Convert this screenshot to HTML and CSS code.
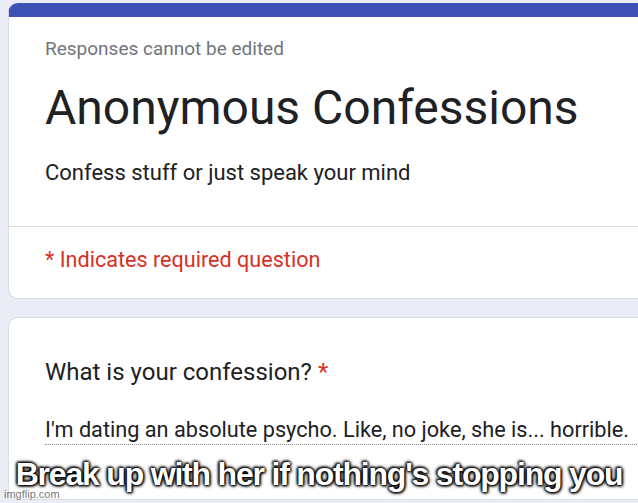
FILE: index.html
```html
<!DOCTYPE html>
<html lang="en">
<head>
  <meta charset="UTF-8">
  <title>Anonymous Confessions</title>
  <link rel="stylesheet" href="styles.css">
</head>
<body>
  <div class="page">
    <div class="card card-head">
      <div class="head-top">
        <p class="note">Responses cannot be edited</p>
        <h1>Anonymous Confessions</h1>
        <p class="desc">Confess stuff or just speak your mind</p>
      </div>
      <div class="head-bottom">
        <p class="required">* Indicates required question</p>
      </div>
    </div>

    <div class="card card-question">
      <h2>What is your confession? <span class="star">*</span></h2>
      <div class="answer">I'm dating an absolute psycho. Like, no joke, she is... horrible.</div>
    </div>
  </div>

  <div class="caption">Break up with her if nothing's stopping you</div>
  <div class="watermark">imgflip.com</div>
</body>
</html>
```

FILE: styles.css
```css
body {
  margin: 0;
  padding: 0;
  background: #ebedf6;
  font-family: Roboto, "Liberation Sans", sans-serif;
  color: #202124;
  overflow: hidden;
  height: 503px;
  position: relative;
}

.page {
  padding: 3px 0 0 8px;
  display: flex;
  flex-direction: column;
  gap: 18px;
}

.card {
  width: 660px;
  background: #fff;
  border: 1px solid #dadce0;
  border-radius: 10px;
  box-sizing: border-box;
  flex-shrink: 0;
}

.card-head {
  border-top: 14px solid #3f51b5;
  height: 296px;
}

.head-top {
  padding: 21px 0 0 36px;
  height: 210px;
  box-sizing: border-box;
  border-bottom: 1px solid #dadce0;
}

.note {
  margin: 0;
  font-size: 19px;
  line-height: 22px;
  color: #70757a;
}

h1 {
  margin: 19px 0 0;
  font-size: 48px;
  font-weight: 400;
  line-height: 58px;
}

.desc {
  margin: 23px 0 0;
  font-size: 22px;
  line-height: 26px;
}

.head-bottom {
  padding: 20px 0 0 36px;
}

.required {
  margin: 0;
  font-size: 21.6px;
  line-height: 25px;
  color: #d93025;
}

.card-question {
  height: 183px;
  padding: 40px 0 0 36px;
}

h2 {
  margin: 0;
  font-size: 24px;
  line-height: 28px;
  font-weight: 400;
}

.star {
  color: #d93025;
}

.answer {
  margin-top: 31px;
  font-size: 21.7px;
  line-height: 26px;
  padding-bottom: 1px;
  border-bottom: 1px dotted #8a8a8a;
  white-space: nowrap;
}

.caption {
  position: absolute;
  left: 0;
  right: 0;
  top: 456px;
  text-align: center;
  font-family: "Liberation Sans", Arial, sans-serif;
  font-weight: bold;
  font-size: 32px;
  letter-spacing: -1.2px;
  color: #fff;
  text-shadow: 0 0 2px #000, 0 0 3px #000, 0 0 4px #000, 1px 1px 3px #000, -1px -1px 3px #000;
}

.watermark {
  position: absolute;
  left: 4px;
  top: 488px;
  font-family: "Liberation Sans", Arial, sans-serif;
  font-size: 11px;
  color: #7a7a7a;
}
```
